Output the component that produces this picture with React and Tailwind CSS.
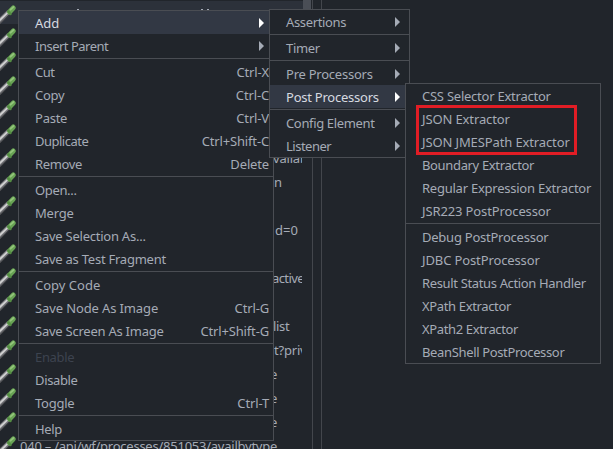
// Letter fitting per label: a = none, growing tighter towards e.
const FIT = {
  a: "tracking-normal",
  b: "tracking-[-0.12px]",
  c: "tracking-[-0.24px]",
  d: "tracking-[-0.35px]",
  e: "tracking-[-0.5px]",
};

const MAIN = [
  [["Add", "a", ">", "on"], ["Insert Parent", "e", ">"]],
  [["Cut", "e", "Ctrl-X"], ["Copy", "c", "Ctrl-C"], ["Paste", "c", "Ctrl-V"], ["Duplicate", "e", "Ctrl+Shift-C"], ["Remove", "d", "Delete"]],
  [["Open...", "d"], ["Merge", "c"], ["Save Selection As...", "c"], ["Save as Test Fragment", "c"]],
  [["Copy Code", "a"], ["Save Node As Image", "b", "Ctrl-G"], ["Save Screen As Image", "c", "Ctrl+Shift-G"]],
  [["Enable", "d", "", "off"], ["Disable", "d"], ["Toggle", "c", "Ctrl-T"]],
  [["Help", "d"]],
];

const ADD = [
  [["Assertions", "d", ">"]],
  [["Timer", "d", ">"]],
  [["Pre Processors", "c", ">"], ["Post Processors", "c", ">", "on"]],
  [["Config Element", "d", ">"], ["Listener", "e", ">"]],
];

const POST = [
  [["CSS Selector Extractor", "c"], ["JSON Extractor", "b"], ["JSON JMESPath Extractor", "b"], ["Boundary Extractor", "d"], ["Regular Expression Extractor", "c"], ["JSR223 PostProcessor", "b"]],
  [["Debug PostProcessor", "c"], ["JDBC PostProcessor", "b"], ["Result Status Action Handler", "d"], ["XPath Extractor", "d"], ["XPath2 Extractor", "d"], ["BeanShell PostProcessor", "d"]],
];

// Visible tails of the request names in the tree, with their left inset.
const TREE = [
  ["", ""], ["", ""], ["", ""], ["", ""], ["", ""], ["", ""],
  ["vailab", "pl-[256px] tracking-[-0.2px]"],
  ["n", "pl-[257px]"],
  ["", ""],
  ["d=0", "pl-[258px]"],
  ["", ""],
  ["active", "pl-[255px] tracking-[-0.6px]"],
  ["", ""],
  ["list", "pl-[256px] tracking-[-0.35px]"],
  ["t?priv", "pl-[257px] tracking-[-0.2px]"],
  ["e", "pl-[253px]"],
  ["e", "pl-[253px]"],
  ["e", "pl-[253px]"],
  ["040 – /api/wf/processes/851053/availbytype", "pl-[3px] tracking-[-0.24px]"],
];

function Pipette() {
  return (
    <svg className="mt-[3px] shrink-0" width="17" height="20" viewBox="0 0 17 20">
      <path d="M-2 18.700 L9 8" stroke="#77787c" strokeWidth="5" />
      <path d="M-2 18 L9 7.300" stroke="#d2d2d3" strokeWidth="1.800" />
      <path d="M-1 20.500 L10 10" stroke="#35363b" strokeWidth="1" />
      <path d="M9.500 8 L13.300 4" stroke="#68a354" strokeWidth="5" strokeLinecap="round" />
      <path d="M8.300 7.500 L10.500 10" stroke="#548c43" strokeWidth="2.400" strokeLinecap="round" />
      <path d="M10.500 5.700 L13.500 3" stroke="#93c57b" strokeWidth="1.800" strokeLinecap="round" />
    </svg>
  );
}

function Item({ label, fit, extra, state }) {
  const tone =
    state === "on" ? "bg-[#323844] text-[#d7dae0]" : state === "off" ? "text-[#3d434f]" : "text-[#a5abb6]";
  return (
    <div className={`flex h-[23px] items-center justify-between pl-4 pr-1 pt-0.5 ${tone}`}>
      <span className={FIT[fit]}>{label}</span>
      {extra === ">" ? (
        <svg className="mb-px mr-[5px]" width="5" height="10" viewBox="0 0 5 10">
          <path d="M0 0 L5 5 L0 10 Z" fill={state === "on" ? "#ffffff" : "#a5abb6"} />
        </svg>
      ) : (
        <span className="tracking-[-0.15px]">{extra}</span>
      )}
    </div>
  );
}

function Menu({ groups, className }) {
  return (
    <div className={`absolute flex flex-col border border-[#4a4d53] bg-[#21252b] ${className}`}>
      {groups.map((g, i) => (
        <div key={i} className="flex flex-col">
          {i > 0 && <div className="my-px h-px bg-[#4a4d53]" />}
          {g.map(([label, fit, extra, state]) => (
            <Item key={label} label={label} fit={fit} extra={extra} state={state} />
          ))}
        </div>
      ))}
    </div>
  );
}

export default function App() {
  return (
    <div className="relative flex h-[449px] w-[613px] overflow-hidden whitespace-pre bg-[#21252b] font-['Noto_Sans',sans-serif] text-[13px] leading-[23px] text-[#a5abb6]">
      <div className="flex w-[303px] flex-col overflow-hidden">
        {TREE.map(([text, inset], i) => (
          <div key={i} className={`flex h-[24px] shrink-0 overflow-hidden ${i === 0 ? "w-[303px] border-t border-[#21252b] bg-[#2c313a]" : "w-[302px]"}`}>
            <Pipette />
            {i === 0 && (
              <svg className="mt-2" width="200" height="2" viewBox="0 0 200 2">
                <path d="M60 0.500 h2 M184 0.500 h2 M190 0.500 h2" stroke="#a5abb6" />
              </svg>
            )}
            <div className={`pt-[3px] ${inset}`}>{text}</div>
          </div>
        ))}
      </div>
      <div className="w-[10px] border-r border-[#43464c]">
        <div className="h-[140px] w-[8px] bg-[#4a4e56]" />
      </div>
      <div className="w-[9px] border-r border-[#43464c]" />
      <Menu groups={MAIN} className="left-[18px] top-[10px] w-[256px]" />
      <Menu groups={ADD} className="left-[269px] top-[9px] w-[141px]" />
      <Menu groups={POST} className="left-[405px] top-[83px] w-[196px]" />
      <div className="absolute left-[416px] top-[105px] h-[50px] w-[161px] border-[3px] border-[#e11d25]" />
    </div>
  );
}
